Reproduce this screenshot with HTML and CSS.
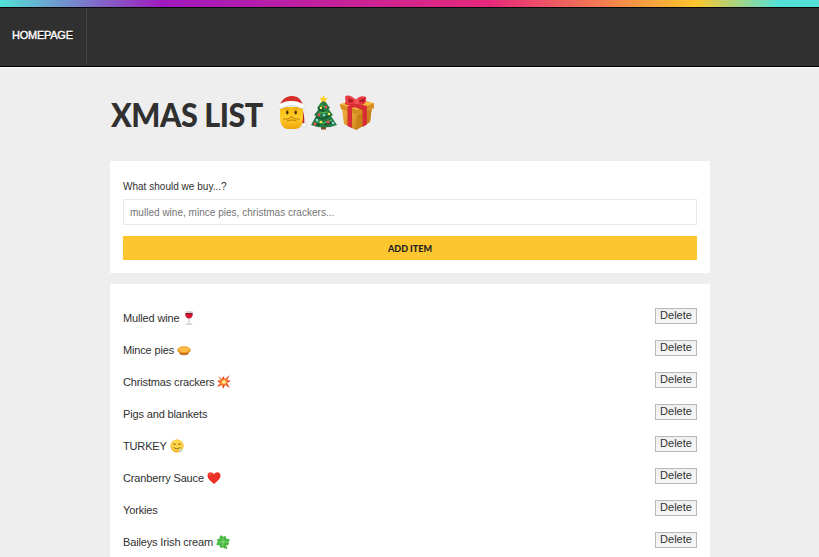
FILE: index.html
```html
<!DOCTYPE html>
<html lang="en">
<head>
<meta charset="utf-8">
<title>Xmas List</title>
<link rel="stylesheet" href="styles.css">
</head>
<body>
<div class="rainbow"></div>
<nav class="nav"><a class="nav-link">HOMEPAGE</a></nav>
<main class="wrapper">
  <h1 class="title"><span class="title-text">XMAS LIST</span>
    <svg class="title-icons" width="97" height="36" viewBox="0 0 97 36">
      <defs>
        <linearGradient id="skin" x2="0" y2="1"><stop stop-color="#f8b910"/><stop offset=".5" stop-color="#ffd02c"/><stop offset="1" stop-color="#efa30c"/></linearGradient>
        <linearGradient id="box" x2="1" y2="1"><stop stop-color="#f4b542"/><stop offset="1" stop-color="#c47a13"/></linearGradient>
      </defs>
      <path fill="#b71f25" d="M20 5Q27 15 26.500 31L23 26V11Z"/>
      <path fill="url(#skin)" d="M2 12H25V23Q25 33 18 34H9Q2 32 2 23Z"/>
      <path fill="#f5b619" d="M5 24Q10 25 13.500 21Q17 25 22 24Q20 28 13.500 25Q8 28 5 24Z"/>
      <path d="M5 24Q10 25 13.500 21.500Q17 25 22 24M9 26Q13.500 24 18 26" fill="none" stroke="#b77908" stroke-width=".8"/>
      <path d="M7 14.500Q9 13 11 14.500M16 14.500Q18 13 20 14.500" fill="none" stroke="#d58b0b" stroke-width=".8"/>
      <ellipse cx="9.300" cy="17.500" rx="1.200" ry="1.900" fill="#4b2c08"/><ellipse cx="17.700" cy="17.500" rx="1.200" ry="1.900" fill="#4b2c08"/>
      <path fill="#d72e2b" d="M2 10C4 3 10 1 14 1C20 1 24 5 25 11Z"/>
      <path d="M2.500 11.500Q13 5.500 24.500 11.500" fill="none" stroke="#d0d9df" stroke-width="5" stroke-linecap="round"/>
      <path d="M2.500 11Q13 5 24.500 11" fill="none" stroke="#fff" stroke-width="3.800" stroke-linecap="round"/>
      <circle cx="26.300" cy="30.500" r="2.500" fill="#d8dfe4"/><circle cx="26" cy="30" r="1.800" fill="#fff"/>
      <path fill="#81502a" d="M43 28H48V34.500H43Z"/>
      <path fill="#267b43" d="M45.500 4L52 13L50.500 14L55 20L53 21L59 30Q46 35 33 30L38 21L36 20L41 14L39 13Z"/>
      <g fill="none"><path d="M40 14L44 15M38 22L45 24L53 20M36 29L42 30M46 29L55 28M45 10V18" stroke="#124d2b" stroke-width="1.300"/>
      <path d="M43 10L48 13M41 18L50 17M38 26L46 28L54 25" stroke="#59b84e" stroke-width="1.200"/></g>
      <path fill="#ffcf27" d="M45.500 0L46.700 3L50 3L47.500 5L48.500 8L45.500 6L42.500 8L43.500 5L41 3H44.300Z"/>
      <g fill="#f04a56"><circle cx="48" cy="12" r="1.300"/><circle cx="41" cy="20" r="1.400"/><circle cx="50" cy="27" r="1.500"/><circle cx="37" cy="29" r="1.400"/></g>
      <g fill="#ffe75c"><circle cx="43" cy="13" r="1.200"/><circle cx="51" cy="19" r="1.300"/><circle cx="43" cy="27" r="1.300"/></g>
      <g fill="#8dd9ee"><circle cx="46" cy="20" r="1.200"/><circle cx="39" cy="25" r="1.200"/><circle cx="55" cy="28" r="1.300"/></g>
      <path fill="url(#box)" d="M64 13L79 19L94 11L92 27L78 35L66 29Z"/>
      <path fill="#c98019" d="M79 19L94 11L92 27L78 35Z"/>
      <path fill="#f5b741" d="M62 9L80 4L96 8V13L79 20L63 14Z"/>
      <path fill="#d88f22" d="M62 9L79 15L96 8V13L79 20L63 14Z"/>
      <path fill="#d92d35" d="M67 7.500L71 6.500L89 11V29.500L84.500 32V15L67 9ZM84 5L89 6L74 13V33L69.500 31V11.500Z"/>
      <path fill="#e93c42" d="M78 5C73-1 67 0 67 2L68 10L78 8C84 12 89 9 88 2C84 0 80 2 78 5Z"/>
      <path fill="#af1a27" d="M70 3L77 6L71 8ZM80 6L87 3L86 8Z"/><circle cx="78.500" cy="6.500" r="2.700" fill="#f15254"/>
    </svg>
  </h1>
  <form class="panel form">
    <label class="label" for="item"><span>What should we buy...?</span></label>
    <input class="field" id="item" placeholder="mulled wine, mince pies, christmas crackers...">
    <button class="add" type="button">ADD ITEM</button>
  </form>
  <ul class="panel list">
    <li class="row"><span class="name">Mulled wine</span>
      <svg class="icon" viewBox="0 0 14 14"><path fill="#d3d6d9" d="M3.500 0H10.500L11 5Q10 8 7.700 8V12L10.500 13V14H3.500V13L6.300 12V8Q4 8 3 5Z"/><path fill="#d5142d" d="M3.300 2.500H10.700L10.400 5Q9 7.500 7 7.500Q5 7.500 3.600 5Z"/><path d="M3.500 2.500H10.500" stroke="#7f1329"/></svg>
      <button class="delete">Delete</button></li>
    <li class="row"><span class="name">Mince pies</span>
      <svg class="icon" viewBox="0 0 14 14"><path fill="#bc6d20" d="M1 7H13L11 11.500Q7 13 3 11.500Z"/><ellipse cx="7" cy="7" rx="6.800" ry="3.700" fill="#df8d25"/><ellipse cx="7" cy="6.500" rx="5.800" ry="2.700" fill="#ffb945"/></svg>
      <button class="delete">Delete</button></li>
    <li class="row"><span class="name">Christmas crackers</span>
      <svg class="icon" viewBox="0 0 14 14"><path fill="#e84626" d="M1 1L5 4L6 1L8 4L13 0L10 5L14 6L10 8L13 13L8 10L6 14L5 10L0 12L3 8L0 6L4 5Z"/><path fill="#ff9b31" d="M3 3L6 5L7 3L8 5L11 3L9 6L12 7L9 8L10 11L7 9L5 12L5 9L2 10L4 7L2 6L5 6Z"/><circle cx="7" cy="7" r="1.800" fill="#fff1a1"/></svg>
      <button class="delete">Delete</button></li>
    <li class="row"><span class="name">Pigs and blankets</span><button class="delete">Delete</button></li>
    <li class="row"><span class="name">TURKEY</span>
      <svg class="icon" viewBox="0 0 14 14"><circle cx="7" cy="7" r="6.500" fill="#f4ae1b"/><circle cx="7" cy="6.300" r="5.700" fill="#ffd748"/><path d="M3 5.500Q4.500 4 6 5.500M8 5.500Q9.500 4 11 5.500M3.500 8.500Q7 11.500 10.500 8.500" fill="none" stroke="#8a5917" stroke-width=".9"/><path d="M9.500 9.500Q12 10 11.500 13Q9 14 9.500 9.500Z" fill="#b9dcec"/></svg>
      <button class="delete">Delete</button></li>
    <li class="row"><span class="name">Cranberry Sauce</span>
      <svg class="icon" viewBox="0 0 14 14"><path fill="#ed3125" d="M7 13C4 10 .5 8 .5 4.500C.5 .5 5.500 0 7 3.500C8.500 0 13.500 .5 13.500 4.500C13.500 8 10 10 7 13Z"/><path d="M2 4Q3 2 5 3" fill="none" stroke="#ff6959"/></svg>
      <button class="delete">Delete</button></li>
    <li class="row"><span class="name">Yorkies</span><button class="delete">Delete</button></li>
    <li class="row"><span class="name">Baileys Irish cream</span>
      <svg class="icon" viewBox="0 0 14 14"><path d="M7 7Q8 11 11 13.500" fill="none" stroke="#31852d" stroke-width="1.200"/><g fill="#49b944"><path id="leaf" d="M7 7C3 7 3 3 4 2Q3 0 5.500 .5Q7 1 7 2Q9 0 10 2C11 4 9 6 7 7Z"/><use href="#leaf" transform="rotate(90 7 7)"/><use href="#leaf" transform="rotate(180 7 7)"/><use href="#leaf" transform="rotate(270 7 7)"/></g><path d="M7 3V11M3 7H11" stroke="#9ce481" stroke-width=".7"/></svg>
      <button class="delete">Delete</button></li>
  </ul>
</main>
</body>
</html>
```
FILE: styles.css
```css
* { box-sizing: border-box; }
html { height: 100%; overflow: hidden; }
body { margin: 0; height: 100%; overflow: hidden; background: #eee; color: #303030; font-family: "Liberation Sans", Arial, sans-serif; font-size: 11px; }
.rainbow { height: 7px; background: linear-gradient(to right, #53e2d7 0%, #a018be 20%, #e7297a 60%, #fcc52d 85%, #53e2d7 95%); }
.nav { display: flex; height: 60px; background: #303030; border-top: 1px solid #080808; border-bottom: 1px solid #000; box-shadow: 0 1px #fafafa; }
.nav-link { display: flex; align-items: center; width: 87px; height: 57px; padding: 0 0 3px 12px; border-right: 1px solid #444; color: #fff; font-size: 11px; -webkit-text-stroke: .4px #fff; text-shadow: 0 1px 1px #000; letter-spacing: -.25px; }
.wrapper { width: 600px; margin: 0 auto 0 110px; }
.title { display: flex; align-items: center; height: 94px; margin: 0; padding-bottom: 2px; color: #303030; font: 900 33px/1 Lato, sans-serif; }
.title-text { width: 168px; padding-left: 1px; padding-top: 3px; white-space: nowrap; letter-spacing: -.5px; transform: scaleX(.927); transform-origin: 1px 0; }
.title-icons { display: block; flex: none; }
.panel { margin: 0; background: #fff; padding: 13px; }
.form { display: flex; flex-direction: column; height: 112px; }
.label { height: 25px; padding-top: 6px; line-height: 14px; font-size: 10px; letter-spacing: .02px; }
.field { width: 100%; height: 26px; margin: 0 0 11px; padding: 0 6px; border: 1px solid #e8e8e8; background: #fff; font: 10px "Liberation Sans", Arial, sans-serif; letter-spacing: .02px; }
.field::placeholder { color: #757575; opacity: 1; }
.add { width: 100%; height: 24px; padding: 0; border: 0; background: #fec62e; color: #222; font: 900 9px Lato, sans-serif; }
.list { margin-top: 11px; height: 300px; padding-top: 18px; list-style: none; }
.row { display: flex; height: 32px; align-items: center; }
.name { letter-spacing: -.15px; white-space: nowrap; }
.icon { width: 14px; height: 14px; margin-left: 3px; flex: none; }
.delete { width: 42px; height: 16px; margin: -5px 0 0 auto; padding: 0; border: 1px solid #b8b8b8; background: linear-gradient(#efefef, #f7f7f7); color: #333; font: 11px/13px "Liberation Sans", Arial, sans-serif; }
```
